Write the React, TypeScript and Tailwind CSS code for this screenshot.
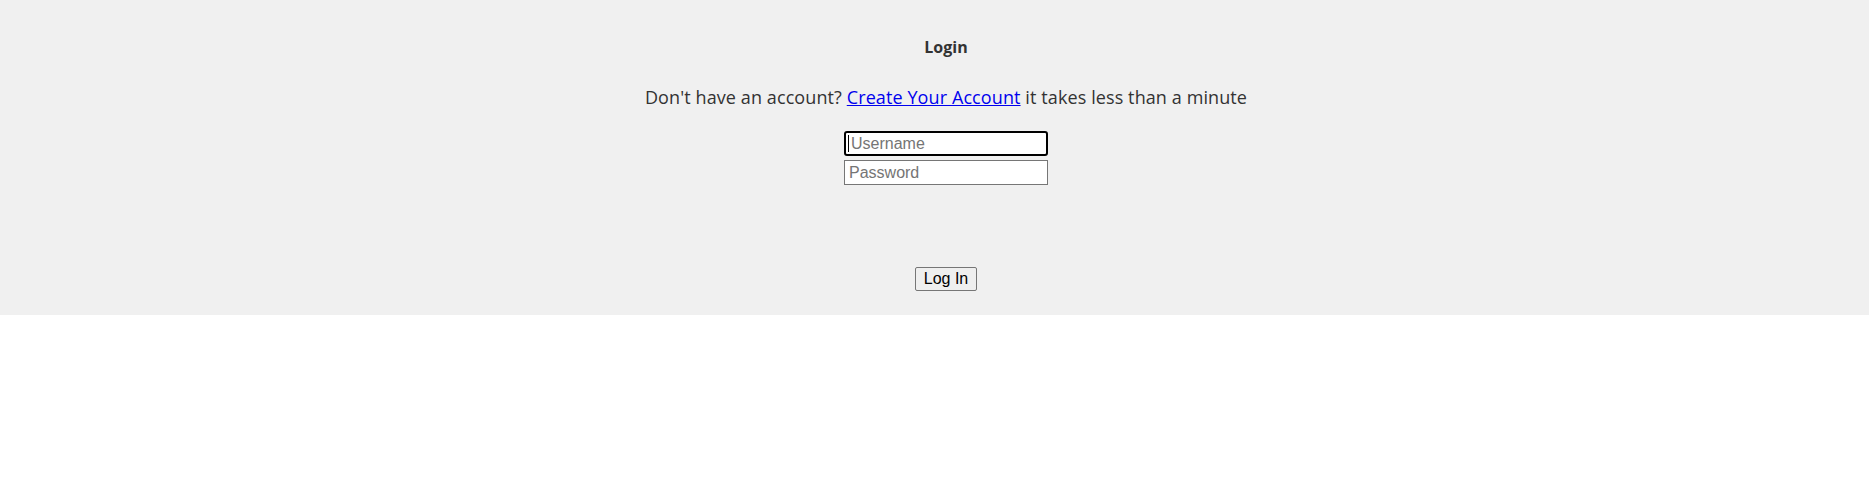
import React from "react";

export default function App() {
  return (
    <div className="w-full min-h-[483px] bg-white">
      <div className="w-full h-[315px] bg-[#f0f0f0] pl-[23px] flex flex-col items-center text-[#333333] [font-family:'Open_Sans',sans-serif]">
        <div className="mt-[37px] text-[16px] leading-[20px] font-bold">Login</div>
        <p className="mt-[28px] text-[18px] leading-[24px] tracking-[0.1px]">
          Don't have an account?{" "}
          <a href="#" className="text-[#0000ee] underline">
            Create Your Account
          </a>{" "}
          it takes less than a minute
        </p>
        <div className="mt-[22px] flex flex-col gap-[4px] [font-family:'Liberation_Sans',Arial,sans-serif]">
          <div className="w-[204px] h-[25px] bg-white border-2 border-black rounded-[3px] flex items-center pl-[2px]">
            <span className="w-px h-[17px] bg-black" />
            <span className="ml-[2px] text-[16px] leading-[18px] text-[#757575]">Username</span>
          </div>
          <input
            className="w-[204px] h-[25px] bg-white border border-[#767676] px-[4px] text-[16px] leading-[18px] text-black placeholder:text-[#757575] outline-none"
            placeholder="Password"
            type="password"
          />
        </div>
        <button className="mt-[82px] w-[62px] h-[24px] bg-[#efefef] border border-[#767676] rounded-[2px] text-[16px] leading-[18px] text-black [font-family:'Liberation_Sans',Arial,sans-serif]">
          Log In
        </button>
      </div>
    </div>
  );
}
